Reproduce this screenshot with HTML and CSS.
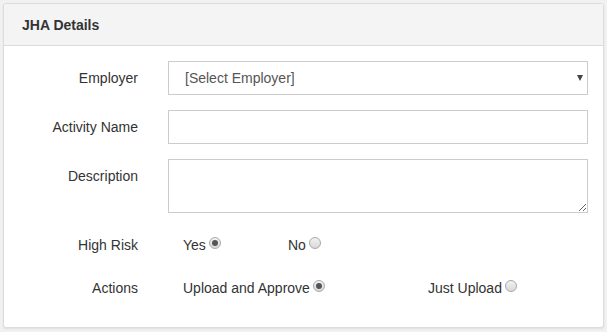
FILE: index.html
```html
<!DOCTYPE html>
<html lang="en">
<head>
    <meta charset="UTF-8">
    <meta name="viewport" content="width=device-width, initial-scale=1.0">
    <title>JHA Details</title>
    <link rel="stylesheet" href="styles.css">
</head>
<body>
    <div class="panel">
        <div class="panel-heading">JHA Details</div>
        <form class="panel-body">
            <div class="form-group">
                <label class="control-label">Employer</label>
                <div class="control">
                    <div class="select-wrap">
                        <select class="form-control">
                            <option>[Select Employer]</option>
                        </select>
                        <span class="caret"></span>
                    </div>
                </div>
            </div>
            <div class="form-group">
                <label class="control-label">Activity Name</label>
                <div class="control">
                    <input class="form-control" type="text">
                </div>
            </div>
            <div class="form-group">
                <label class="control-label">Description</label>
                <div class="control">
                    <textarea class="form-control textarea"></textarea>
                </div>
            </div>
            <div class="form-group radio-row">
                <label class="control-label">High Risk</label>
                <div class="control options">
                    <label class="option short">Yes <input type="radio" name="risk" checked></label>
                    <label class="option">No <input type="radio" name="risk"></label>
                </div>
            </div>
            <div class="form-group radio-row">
                <label class="control-label">Actions</label>
                <div class="control options">
                    <label class="option wide">Upload and Approve <input type="radio" name="action" checked></label>
                    <label class="option">Just Upload <input type="radio" name="action"></label>
                </div>
            </div>
        </form>
    </div>
</body>
</html>
```

FILE: styles.css
```css
body {
    margin: 0;
    padding: 3px;
    background-color: #f1f1f1;
    font-family: "Liberation Sans", Arial, sans-serif;
    font-size: 14px;
    color: #333;
}

.panel {
    background-color: #fff;
    border: 1px solid #dcdcdc;
    border-radius: 3px;
    box-shadow: 0 1px 2px rgba(0, 0, 0, 0.08);
    height: 325px;
    box-sizing: border-box;
}

.panel-heading {
    background-color: #f4f4f4;
    border-bottom: 1px solid #dadada;
    border-radius: 3px 3px 0 0;
    height: 42px;
    box-sizing: border-box;
    padding: 13px 18px 0;
    font-size: 14px;
    font-weight: bold;
    color: #333;
}

.panel-body {
    padding: 15px 0 0;
    margin: 0;
}

.form-group {
    display: grid;
    grid-template-columns: 149px 1fr;
    margin-bottom: 15px;
}

.control-label {
    text-align: right;
    padding: 8px 15px 0 0;
    line-height: 18px;
}

.control {
    padding: 0 15px;
}

.form-control {
    display: block;
    width: 100%;
    box-sizing: border-box;
    height: 34px;
    border: 1px solid #ccc;
    border-radius: 0;
    background-color: #fff;
    font-family: inherit;
    font-size: 14px;
    color: #555;
    margin: 0;
    outline: none;
}

.select-wrap {
    position: relative;
}

select.form-control {
    appearance: none;
    -webkit-appearance: none;
    padding: 0 30px 0 16px;
}

.caret {
    position: absolute;
    right: 5px;
    top: 14px;
    width: 0;
    height: 0;
    border-left: 3px solid transparent;
    border-right: 3px solid transparent;
    border-top: 6px solid #444;
}

.textarea {
    height: 54px;
    resize: vertical;
    padding: 6px 12px;
}

.radio-row {
    height: 32px;
    margin-bottom: 11px;
}

.radio-row .control-label {
    padding-top: 8px;
}

.options {
    display: flex;
    align-items: flex-start;
    padding-left: 30px;
    padding-top: 8px;
    line-height: 18px;
}

.option {
    display: flex;
    align-items: flex-start;
    gap: 3px;
}

.option.short {
    width: 105px;
}

.option.wide {
    width: 245px;
}

.option input {
    appearance: none;
    -webkit-appearance: none;
    margin: 1px 0 0;
    width: 12px;
    height: 12px;
    border-radius: 50%;
    border: 1px solid #a9a9a9;
    background: linear-gradient(#f2f2f2, #d8d8d8);
    box-sizing: border-box;
    position: relative;
}

.option input:checked::after {
    content: "";
    position: absolute;
    left: 2px;
    top: 2px;
    width: 6px;
    height: 6px;
    border-radius: 50%;
    background-color: #555;
}
```
